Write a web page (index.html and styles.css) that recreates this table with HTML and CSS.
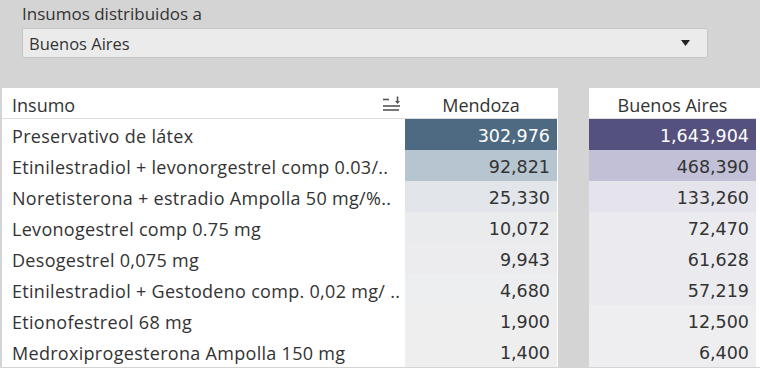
FILE: index.html
```html
<!DOCTYPE html>
<html lang="es">
<head>
<meta charset="utf-8">
<title>Insumos</title>
<link rel="stylesheet" href="styles.css">
</head>
<body>
<div class="filter">
  <div class="filter-title">Insumos distribuidos a</div>
  <div class="select">
    <span class="select-value">Buenos Aires</span>
    <svg class="select-arrow" width="9" height="6" viewBox="0 0 9 6"><path d="M0 0H9L4.5 6Z" fill="#222"/></svg>
  </div>
</div>
<div class="tables">
  <div class="panel panel-main">
    <div class="hdr hdr-label">
      <span>Insumo</span>
      <svg class="sort-icon" width="18" height="16" viewBox="0 0 18 16"><g stroke="#555" stroke-width="1.6" fill="none"><path d="M0 3.5H6"/><path d="M0 10H17"/><path d="M0 14H16"/><path d="M14.5 0.5V6"/></g><path d="M12 5H17L14.5 8Z" fill="#555"/></svg>
    </div>
    <div class="hdr hdr-num">Mendoza</div>

    <div class="lbl">Preservativo de látex</div>
    <div class="num dark" style="background:#4e6a82">302,976</div>
    <div class="lbl">Etinilestradiol + levonorgestrel comp 0.03/..</div>
    <div class="num" style="background:#b7c5d0">92,821</div>
    <div class="lbl">Noretisterona + estradio Ampolla 50 mg/%..</div>
    <div class="num" style="background:#e2e5e9">25,330</div>
    <div class="lbl">Levonogestrel comp 0.75 mg</div>
    <div class="num" style="background:#eaebed">10,072</div>
    <div class="lbl">Desogestrel 0,075 mg</div>
    <div class="num" style="background:#ececee">9,943</div>
    <div class="lbl">Etinilestradiol + Gestodeno comp. 0,02 mg/ ..</div>
    <div class="num" style="background:#edeeef">4,680</div>
    <div class="lbl">Etionofestreol 68 mg</div>
    <div class="num" style="background:#eeeeef">1,900</div>
    <div class="lbl">Medroxiprogesterona Ampolla 150 mg</div>
    <div class="num" style="background:#eeeeef">1,400</div>
  </div>
  <div class="panel panel-ba">
    <div class="hdr hdr-num">Buenos Aires</div>
    <div class="num dark" style="background:#55517e">1,643,904</div>
    <div class="num" style="background:#c2c0d7">468,390</div>
    <div class="num" style="background:#e5e4ec">133,260</div>
    <div class="num" style="background:#eaeaef">72,470</div>
    <div class="num" style="background:#ebebef">61,628</div>
    <div class="num" style="background:#ebebef">57,219</div>
    <div class="num" style="background:#eeeef0">12,500</div>
    <div class="num" style="background:#eeeef0">6,400</div>
  </div>
</div>
</body>
</html>
```
FILE: styles.css
```css
html, body {
  margin: 0;
  padding: 0;
}
body {
  width: 760px;
  height: 368px;
  overflow: hidden;
  background: #d4d4d4;
  font-family: "Open Sans", "Noto Sans", sans-serif;
  color: #333;
}
.filter {
  padding: 3px 52px 0 22px;
  height: 85px;
}
.filter-title {
  font-size: 17px;
  line-height: 22px;
  color: #333;
  height: 25px;
}
.select {
  box-sizing: border-box;
  height: 30px;
  width: 686px;
  background: #ebebeb;
  border: 1px solid #c4c4c4;
  border-radius: 2px;
  display: flex;
  align-items: center;
  justify-content: space-between;
  padding: 0 17px 0 6px;
}
.select-value {
  font-size: 16.5px;
  color: #333;
}
.tables {
  display: flex;
  align-items: flex-start;
  padding-left: 2px;
}
.panel {
  background: #fff;
  display: grid;
  grid-auto-rows: 31px;
}
.panel-main {
  grid-template-columns: 403px 152px;
  padding-right: 1px;
}
.panel-ba {
  margin-left: 31px;
  grid-template-columns: 167px;
  padding-right: 4px;
}
.hdr {
  box-sizing: border-box;
  border-bottom: 1px solid #dcdcdc;
  font-size: 18px;
  display: flex;
  align-items: center;
  padding-top: 3px;
}
.hdr-label {
  padding-left: 10px;
  padding-right: 4px;
  justify-content: space-between;
}
.sort-icon {
  margin-top: -2px;
}
.hdr-num {
  justify-content: center;
}
.lbl {
  box-sizing: border-box;
  font-size: 18px;
  letter-spacing: 0.3px;
  display: flex;
  align-items: center;
  padding: 3px 0 0 10px;
  white-space: nowrap;
  overflow: hidden;
}
.num {
  box-sizing: border-box;
  font-family: "DejaVu Sans", "Open Sans", sans-serif;
  font-size: 17.5px;
  display: flex;
  align-items: center;
  justify-content: flex-end;
  padding: 3px 7px 0 0;
  color: #333;
}
.num.dark {
  color: #fff;
}
```
